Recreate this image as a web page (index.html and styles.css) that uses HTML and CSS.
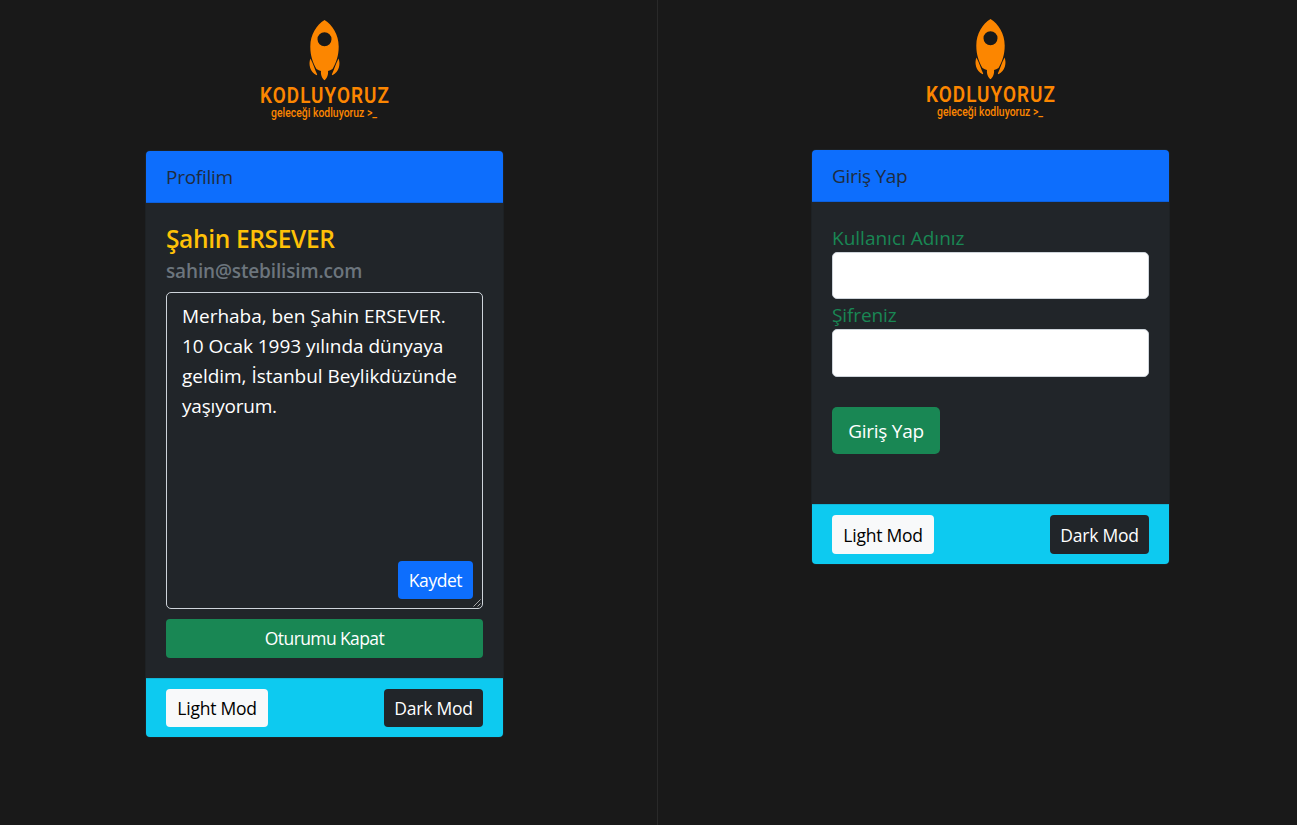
FILE: index.html
```html
<!DOCTYPE html>
<html lang="tr">
<head>
<meta charset="utf-8">
<title>Kodluyoruz</title>
<link rel="stylesheet" href="styles.css">
</head>
<body>
<main class="screens">
  <section class="screen screen-profile">
    <svg class="logo" viewBox="0 0 130 104">
      <path id="rocket" fill-rule="evenodd" d="M64.500 0C56.500 5 50.300 14.500 50.300 26.500C50.300 36 53 43 56.500 49C58 50 59.500 50.700 61 51C60.500 54.500 62 58.500 64.500 60.200C67 58.500 68.500 54.500 68 51C69.500 50.700 71 50 72.500 49C76 43 78.700 36 78.700 26.500C78.700 14.500 72.500 5 64.500 0ZM64.500 12.300a7 7 0 1 1 0 14a7 7 0 1 1 0-14ZM50.400 38.500C48.300 44 49.800 52 56.600 55.300L57.200 54.500C55 50 53.500 44 50.400 38.500ZM78.600 38.500C80.700 44 79.200 52 72.400 55.300L71.800 54.500C74 50 75.500 44 78.600 38.500Z"/>
      <text class="logo-name" transform="scale(.88 1)" x="0" y="83" textLength="146.500">KODLUYORUZ</text>
      <text class="logo-tag" x="11" y="97.300" textLength="106" lengthAdjust="spacingAndGlyphs">geleceği kodluyoruz &gt;_</text>
    </svg>
    <div class="card">
      <header class="card-header"><span>Profilim</span></header>
      <div class="card-body profile-body">
        <h1 class="name">Şahin ERSEVER</h1>
        <p class="mail">sahin@stebilisim.com</p>
        <div class="bio">
          <p class="bio-text">Merhaba, ben Şahin ERSEVER.<br>10 Ocak 1993 yılında dünyaya<br>geldim, İstanbul Beylikdüzünde<br><span class="bio-last">yaşıyorum.</span></p>
          <button class="btn btn-primary save">Kaydet</button>
          <svg class="grip" viewBox="0 0 8 8"><path d="M0.500 7.500L7.500 .5M4.500 7.500L7.500 4.500"/></svg>
        </div>
        <button class="btn btn-success logout">Oturumu Kapat</button>
      </div>
      <footer class="card-footer">
        <button class="btn btn-light">Light Mod</button>
        <button class="btn btn-dark">Dark Mod</button>
      </footer>
    </div>
  </section>
  <section class="screen screen-login">
    <svg class="logo" viewBox="0 0 130 104">
      <use href="#rocket"/>
      <text class="logo-name" transform="scale(.88 1)" x="0" y="83" textLength="146.500">KODLUYORUZ</text>
      <text class="logo-tag" x="11" y="97.300" textLength="106" lengthAdjust="spacingAndGlyphs">geleceği kodluyoruz &gt;_</text>
    </svg>
    <div class="card">
      <header class="card-header"><span>Giriş Yap</span></header>
      <form class="card-body login-body">
        <label for="user" class="label label-user">Kullanıcı Adınız</label>
        <input id="user" class="input">
        <label for="pass" class="label label-pass">Şifreniz</label>
        <input id="pass" type="password" class="input input-pass">
        <button type="button" class="btn btn-success login">Giriş Yap</button>
      </form>
      <footer class="card-footer footer-login">
        <button class="btn btn-light">Light Mod</button>
        <button class="btn btn-dark">Dark Mod</button>
      </footer>
    </div>
  </section>
</main>
</body>
</html>
```
FILE: styles.css
```css
* { box-sizing: border-box; }
body {
  margin: 0;
  background: #191919;
  color: #212529;
  font: 19px/30px "Open Sans", "Noto Sans", sans-serif;
}
h1, p { margin: 0; }
.screens { display: grid; grid-template-columns: 658px 1fr; height: 825px; overflow: hidden; }
.screen { display: flex; flex-direction: column; }
.screen-profile { padding: 20px 0 0 145px; border-right: 1px solid #292929; }
.screen-login { padding: 19px 0 0 153px; }
.logo { width: 130px; height: 104px; margin: 0 0 26px 115px; fill: #fc8600; display: block; overflow: visible; }
.logo-name { font: 600 21.500px Roboto, sans-serif; }
.logo-tag { font: 500 12px Roboto, sans-serif; }
.card { width: 359px; border: 1px solid #1d2124; border-radius: 5px; background: #212529; overflow: hidden; }
.card-header { height: 52px; padding: 11px 20px 9px; background: #0d6efd; border-bottom: 1px solid #0c60dd; white-space: nowrap; color: #1f2c40; letter-spacing: -.28px; }
.card-body { display: flex; flex-direction: column; padding: 20px; }
.profile-body { height: 475px; }
.name { font-size: 24.500px; line-height: 30px; font-weight: 600; color: #ffc107; letter-spacing: -.35px; height: 33px; padding-top: 1px; white-space: nowrap; }
.mail { font-size: 19px; line-height: 24px; font-weight: 600; color: #6c757d; height: 36px; padding-top: 3px; white-space: nowrap; letter-spacing: -.15px; }
.bio { position: relative; height: 317px; flex: none; border: 1px solid #ced4da; border-radius: 5px; padding: 8px 15px; color: #fff; }
.bio-text { white-space: nowrap; letter-spacing: -.03px; }
.bio-last { letter-spacing: -.2px; }
.grip { position: absolute; right: 1px; bottom: 1px; width: 8px; height: 8px; fill: none; stroke: #aaa; }
.btn { font: inherit; font-size: 17.500px; line-height: 26px; height: 38px; border: 0; border-radius: 4px; padding: 6px 0; color: #fff; white-space: nowrap; flex: none; letter-spacing: -.25px; }
.btn-primary { background: #0d6efd; }
.save { position: absolute; right: 9px; bottom: 9px; width: 75px; letter-spacing: -.45px; }
.btn-success { background: #198754; }
.logout { height: 39px; margin-top: 10px; letter-spacing: -.6px; padding: 6px 0 7px; }
.btn-light { width: 102px; background: #f8f9fa; color: #000; }
.btn-dark { width: 99px; background: #212529; }
.card-footer { height: 59px; display: flex; justify-content: space-between; padding: 10px 20px; background: #0dcaf0; border-top: 1px solid #0fb5d7; }
.footer-login { height: 60px; }
.footer-login .btn { height: 39px; }
.login-body { height: 302px; align-items: flex-start; }
.label { color: #198754; white-space: nowrap; height: 30px; padding-top: 1px; }
.label-pass { letter-spacing: -.12px; }
.input { width: 317px; height: 47px; border: 1px solid #ced4da; border-radius: 5px; background: #fff; padding: 0 15px; flex: none; }
.input-pass { height: 48px; }
.login { width: 108px; height: 47px; margin-top: 30px; font-size: 19px; line-height: 30px; border-radius: 5px; letter-spacing: -.25px; }
```
